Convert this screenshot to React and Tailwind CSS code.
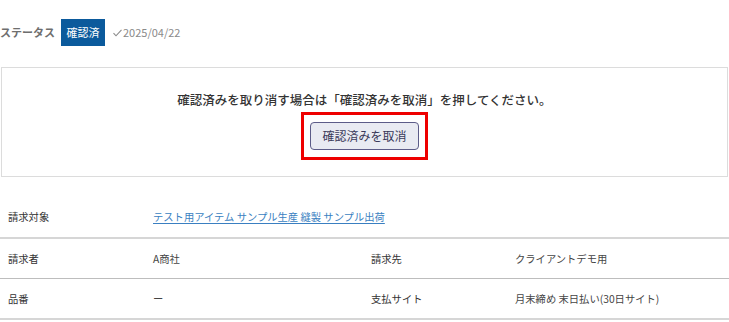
import React from "react";

const rows = [
  { label: "請求対象", value: "テスト用アイテム サンプル生産 縫製 サンプル出荷", link: true, h: "h-[42px]", line: "border-b-2 border-[#d6d6d6]" },
  { label: "請求者", value: "A商社", label2: "請求先", value2: "クライアントデモ用", h: "h-[40px]", line: "border-b border-[#bdbdbd]" },
  { label: "品番", value: "ー", label2: "支払サイト", value2: "月末締め 末日払い(30日サイト)", h: "h-[41px]", line: "border-b-2 border-[#d6d6d6]" },
];

export default function App() {
  return (
    <div className="w-[729px] h-[322px] bg-white overflow-hidden font-['Noto_Sans_CJK_JP','Noto_Sans',sans-serif]">
      <div className="flex items-center pt-[19px]">
        <span className="text-[11px] font-bold text-[#6e6e6e]">ステータス</span>
        <span className="ml-[6px] h-[27px] w-[44px] flex items-center justify-center bg-[#0b5a9c] text-white text-[11px]">
          確認済
        </span>
        <span className="ml-[8px] flex items-center text-[11px] text-[#8a8a8a]">
          <svg width="9" height="8" viewBox="0 0 9 8" className="mr-[1px]">
            <polyline points="0.5,4.2 3,6.8 8.5,0.8" fill="none" stroke="#8a8a8a" strokeWidth="1.1" />
          </svg>
          2025/04/22
        </span>
      </div>

      <div className="ml-[1px] mt-[21px] w-[727px] border border-[#dcdcdc] flex flex-col items-center pt-[22px] pb-[16px]">
        <p className="text-[12.5px] leading-[20px] font-medium text-[#333]">
          確認済みを取り消す場合は「確認済みを取消」を押してください。
        </p>
        <div className="mt-[2px] border-[3px] border-[#ee0000] px-[6px] py-[7px]">
          <button className="w-[109px] h-[28px] rounded-[4px] border border-[#5c5c88] bg-[#e9ebf2] text-[12px] text-[#3a3a5a]">
            確認済みを取消
          </button>
        </div>
      </div>

      <div className="mt-[20px]">
        {rows.map((r) => (
          <div key={r.label} className={`grid grid-cols-[145px_218px_144px_1fr] items-center text-[10.3px] ${r.h} ${r.line}`}>
            <div className="pl-[8px] text-[#333]">{r.label}</div>
            <div className="pl-[8px] whitespace-nowrap">
              {r.link ? (
                <a className="text-[#3a7fc1] underline underline-offset-2">{r.value}</a>
              ) : (
                <span className="text-[#444]">{r.value}</span>
              )}
            </div>
            <div className="pl-[8px] text-[#333]">{r.label2}</div>
            <div className="pl-[8px] text-[#444]">{r.value2}</div>
          </div>
        ))}
      </div>
    </div>
  );
}
